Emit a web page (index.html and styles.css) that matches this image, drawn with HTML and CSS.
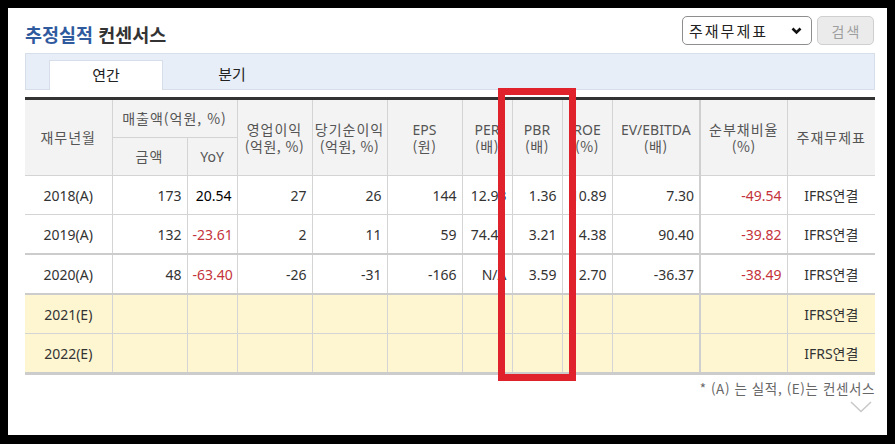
FILE: index.html
```html
<!DOCTYPE html>
<html lang="ko">
<head>
<meta charset="utf-8">
<link rel="stylesheet" href="styles.css">
</head>
<body>
<div class="frame">
  <div class="head">
    <h2 class="title"><span class="blue">추정실적</span> 컨센서스</h2>
    <div class="controls">
      <div class="select"><span>주재무제표</span>
        <svg class="sel-arrow" width="11" height="8" viewBox="0 0 11 8"><polyline points="1.5,1.5 5.5,5.5 9.5,1.5" fill="none" stroke="#111" stroke-width="2.6"/></svg>
      </div>
      <button class="btn">검색</button>
    </div>
  </div>
  <div class="tabs">
    <div class="tab active">연간</div>
    <div class="tab wide">분기</div>
  </div>
  <table class="grid">
    <colgroup>
      <col style="width:87px"><col style="width:75px"><col style="width:50px"><col style="width:75px"><col style="width:75px"><col style="width:75px"><col style="width:50px"><col style="width:50px"><col style="width:50px"><col style="width:88px"><col style="width:87px"><col style="width:88px">
    </colgroup>
    <thead>
      <tr>
        <th rowspan="2" class="first ko">재무년월</th>
        <th colspan="2" class="ko">매출액(억원, %)</th>
        <th rowspan="2" class="ko">영업이익<br><span class="unit">(억원, %)</span></th>
        <th rowspan="2" class="ko">당기순이익<br><span class="unit">(억원, %)</span></th>
        <th rowspan="2">EPS<br><span class="unit">(원)</span></th>
        <th rowspan="2">PER<br><span class="unit">(배)</span></th>
        <th rowspan="2">PBR<br><span class="unit">(배)</span></th>
        <th rowspan="2">ROE<br><span class="unit">(%)</span></th>
        <th rowspan="2">EV/EBITDA<br><span class="unit">(배)</span></th>
        <th rowspan="2" class="ko sep">순부채비율<br><span class="unit">(%)</span></th>
        <th rowspan="2" class="last ko">주재무제표</th>
      </tr>
      <tr>
        <th class="ko">금액</th>
        <th>YoY</th>
      </tr>
    </thead>
    <tbody>
      <tr>
        <td class="first c">2018(A)</td><td>173</td><td class="pos">20.54</td><td>27</td><td>26</td><td>144</td><td>12.93</td><td>1.36</td><td>10.89</td><td>7.30</td><td class="neg sep">-49.54</td><td class="last c">IFRS연결</td>
      </tr>
      <tr>
        <td class="first c">2019(A)</td><td>132</td><td class="neg">-23.61</td><td>2</td><td>11</td><td>59</td><td>74.41</td><td>3.21</td><td>4.38</td><td>90.40</td><td class="neg sep">-39.82</td><td class="last c">IFRS연결</td>
      </tr>
      <tr class="split">
        <td class="first c">2020(A)</td><td>48</td><td class="neg">-63.40</td><td>-26</td><td>-31</td><td>-166</td><td>N/A</td><td>3.59</td><td>12.70</td><td>-36.37</td><td class="neg sep">-38.49</td><td class="last c">IFRS연결</td>
      </tr>
      <tr class="split est">
        <td class="first c">2021(E)</td><td></td><td></td><td></td><td></td><td></td><td></td><td></td><td></td><td></td><td class="sep"></td><td class="last c">IFRS연결</td>
      </tr>
      <tr class="est end">
        <td class="first c">2022(E)</td><td></td><td></td><td></td><td></td><td></td><td></td><td></td><td></td><td></td><td class="sep"></td><td class="last c">IFRS연결</td>
      </tr>
    </tbody>
  </table>
  <p class="note">* (A) 는 실적, (E)는 컨센서스</p>
  <div class="more">
    <svg width="22" height="12" viewBox="0 0 22 12"><polyline points="1,1 11,10.5 21,1" fill="none" stroke="#c9c9c9" stroke-width="1.6"/></svg>
  </div>
  <div class="highlight"></div>
</div>
</body>
</html>
```

FILE: styles.css
```css
html, body {
  margin: 0;
  padding: 0;
  background: #000;
}

.frame {
  position: relative;
  margin: 8px;
  width: 879px;
  height: 427px;
  box-sizing: border-box;
  padding: 8px 12px 0 17px;
  background: #fff;
  font-family: "Noto Sans", "Noto Sans CJK KR", sans-serif;
  color: #333;
}

.head {
  display: flex;
  justify-content: space-between;
  align-items: center;
  height: 29px;
}

.title {
  margin: 0;
  padding-top: 6px;
  font-size: 18.5px;
  font-weight: bold;
  color: #333;
  font-family: "Noto Sans CJK KR", sans-serif;
}

.blue {
  color: #2f5a9e;
}

.controls {
  display: flex;
  gap: 5px;
  margin-right: 1px;
}

.select {
  width: 130px;
  height: 29px;
  box-sizing: border-box;
  border: 1px solid #8e8e8e;
  border-radius: 5px;
  display: flex;
  align-items: center;
  justify-content: space-between;
  padding: 0 9px 0 6px;
  font-family: "Noto Sans CJK KR", sans-serif;
  font-size: 15px;
  letter-spacing: 2px;
  color: #222;
}

.btn {
  width: 57px;
  height: 29px;
  box-sizing: border-box;
  border: 1px solid #cfcfcf;
  border-radius: 5px;
  background: #ebebeb;
  color: #9e9e9e;
  font-family: "Noto Sans CJK KR", sans-serif;
  font-size: 14px;
  letter-spacing: 2px;
  padding: 0 0 0 2px;
}

.tabs {
  margin-top: 8px;
  height: 37px;
  box-sizing: border-box;
  border: 1px solid #d6dee9;
  background: #e8eef7;
  display: flex;
  align-items: flex-end;
  padding-left: 23px;
}

.tab {
  width: 114px;
  height: 29px;
  box-sizing: border-box;
  text-align: center;
  line-height: 27px;
  font-family: "Noto Sans CJK KR", sans-serif;
  font-size: 15px;
  color: #222;
}

.tab.wide {
  width: 138px;
}

.tab.active {
  background: #fff;
  border: 1px solid #d6dee9;
  border-bottom: none;
  margin-bottom: -1px;
  height: 30px;
}

.grid {
  margin-top: 7px;
  width: 850px;
  table-layout: fixed;
  border-collapse: collapse;
  border-top: 3px solid #333;
  font-size: 14px;
}

.grid th {
  background: #f3f3f3;
  color: #555;
  font-weight: normal;
  border: 1px solid #d4d4d4;
  height: 37px;
  padding: 0;
  line-height: 17px;
  text-align: center;
}

.grid th.ko {
  font-family: "Noto Sans CJK KR", sans-serif;
  letter-spacing: 1px;
}

.unit {
  font-family: "Noto Sans CJK KR", sans-serif;
  letter-spacing: 0.5px;
}

.grid td {
  border: 1px solid #d4d4d4;
  height: 38px;
  padding: 0 5px;
  text-align: right;
  color: #333;
  white-space: nowrap;
}

.grid td.c {
  text-align: center;
  padding: 0;
}

.grid .first {
  border-left: none;
}

.grid .last {
  border-right: none;
  font-family: "Noto Sans", "Noto Sans CJK KR", sans-serif;
}

.grid .sep {
  border-left: 2px solid #cfcfcf;
}

.grid td.pos {
  color: #000;
}

.grid td.neg {
  color: #c4333b;
}

.grid tr.split td {
  border-top: 2px solid #cccccc;
}

.grid tr.est td {
  background: #fdf6d1;
}

.grid tr.end td {
  border-bottom: 3px solid #cccccc;
}

.note {
  margin: 5px 0 0;
  text-align: right;
  font-family: "Noto Sans CJK KR", sans-serif;
  font-size: 13.5px;
  line-height: 16px;
  color: #666;
  letter-spacing: 0.6px;
}

.more {
  display: flex;
  justify-content: flex-end;
  padding-right: 3px;
  margin-top: 5px;
}

.highlight {
  position: absolute;
  left: 490px;
  top: 80px;
  width: 64px;
  height: 279px;
  border: 7px solid #e0222c;
}
```
